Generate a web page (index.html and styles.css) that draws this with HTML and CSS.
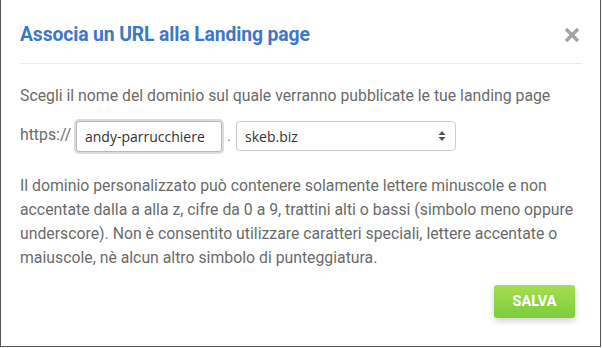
FILE: index.html
```html
<!DOCTYPE html>
<html lang="it">
<head>
<meta charset="utf-8">
<link rel="stylesheet" href="styles.css">
</head>
<body>
<div class="modal">
  <div class="modal-header">
    <h2 class="modal-title">Associa un URL alla Landing page</h2>
    <button class="close" aria-label="Chiudi">
      <svg width="16" height="16" viewBox="0 0 16 16"><path d="M2 2 L14 14 M14 2 L2 14" stroke="#a3a3a3" stroke-width="3.4" stroke-linecap="butt"/></svg>
    </button>
  </div>
  <div class="modal-body">
    <p class="intro">Scegli il nome del dominio sul quale verranno pubblicate le tue landing page</p>
    <div class="domain-row">
      <span class="proto">https://</span>
      <input class="subdomain" type="text" value="andy-parrucchiere">
      <span class="dot">.</span>
      <div class="select">
        <span>skeb.biz</span>
        <svg class="arrows" width="8" height="12" viewBox="0 0 8 12"><path d="M4 1 L7.5 5 H0.5 Z M4 11 L7.5 7 H0.5 Z" fill="#555"/></svg>
      </div>
    </div>
    <p class="help">Il dominio personalizzato può contenere solamente lettere minuscole e non accentate dalla a alla z, cifre da 0 a 9, trattini alti o bassi (simbolo meno oppure underscore). Non è consentito utilizzare caratteri speciali, lettere accentate o maiuscole, nè alcun altro simbolo di punteggiatura.</p>
  </div>
  <div class="modal-footer">
    <button class="btn-save">SALVA</button>
  </div>
</div>
</body>
</html>
```

FILE: styles.css
```css
* { box-sizing: border-box; }
html, body { margin: 0; padding: 0; background: #fff; }
body { font-family: Roboto, "Noto Sans", sans-serif; color: #6b6b6b; }
.modal {
  width: 601px;
  height: 348px;
  margin-top: -1px;
  border: 1px solid #555;
  background: #fff;
  display: flex;
  flex-direction: column;
}
.modal-header {
  margin: 0 18px 0 19px;
  height: 64px;
  border-bottom: 1px solid #ececec;
  display: flex;
  align-items: center;
  justify-content: space-between;
  padding-top: 6px;
}
.modal-title {
  margin: 0;
  font-size: 19.3px;
  font-weight: 700;
  color: #3d78c5;
  letter-spacing: -0.1px;
}
.close {
  background: none;
  border: 0;
  padding: 0;
  width: 16px;
  height: 16px;
  margin-right: 2px;
  display: flex;
}
.modal-body { padding: 0 19px; }
.intro {
  margin: 22px 0 0;
  font-size: 15.8px;
  line-height: 20px;
}
.domain-row {
  display: flex;
  align-items: center;
  margin-top: 14px;
  height: 32px;
}
.proto { font-size: 15.8px; width: 56px; padding-bottom: 3px; flex: none; }
.subdomain {
  width: 146px;
  height: 31px;
  border: 1px solid #b9b9b9;
  border-radius: 3px;
  box-shadow: 0 0 0 2px #dcdcdc;
  padding: 0 8px;
  font-family: "Open Sans", sans-serif;
  font-size: 14px;
  color: #333;
  outline: none;
  flex: none;
}
.dot { width: 14px; text-align: center; font-size: 14px; color: #666; flex: none; }
.select {
  width: 220px;
  height: 30px;
  border: 1px solid #ccc;
  border-radius: 4px;
  display: flex;
  align-items: center;
  justify-content: space-between;
  padding: 0 9px 0 8px;
  font-family: "Open Sans", sans-serif;
  font-size: 14px;
  color: #333;
  flex: none;
}
.help {
  margin: 22px 0 0;
  font-size: 15.8px;
  line-height: 24px;
}
.modal-footer {
  display: flex;
  justify-content: flex-end;
  padding: 15px 25px 0 0;
}
.btn-save {
  width: 81px;
  height: 33px;
  border: 0;
  border-radius: 3px;
  background: linear-gradient(#a6dd50, #7acd3b);
  box-shadow: 0 3px 6px rgba(0,0,0,0.18);
  color: #fff;
  font-family: Roboto, sans-serif;
  font-weight: 700;
  font-size: 14.5px;
}
```
